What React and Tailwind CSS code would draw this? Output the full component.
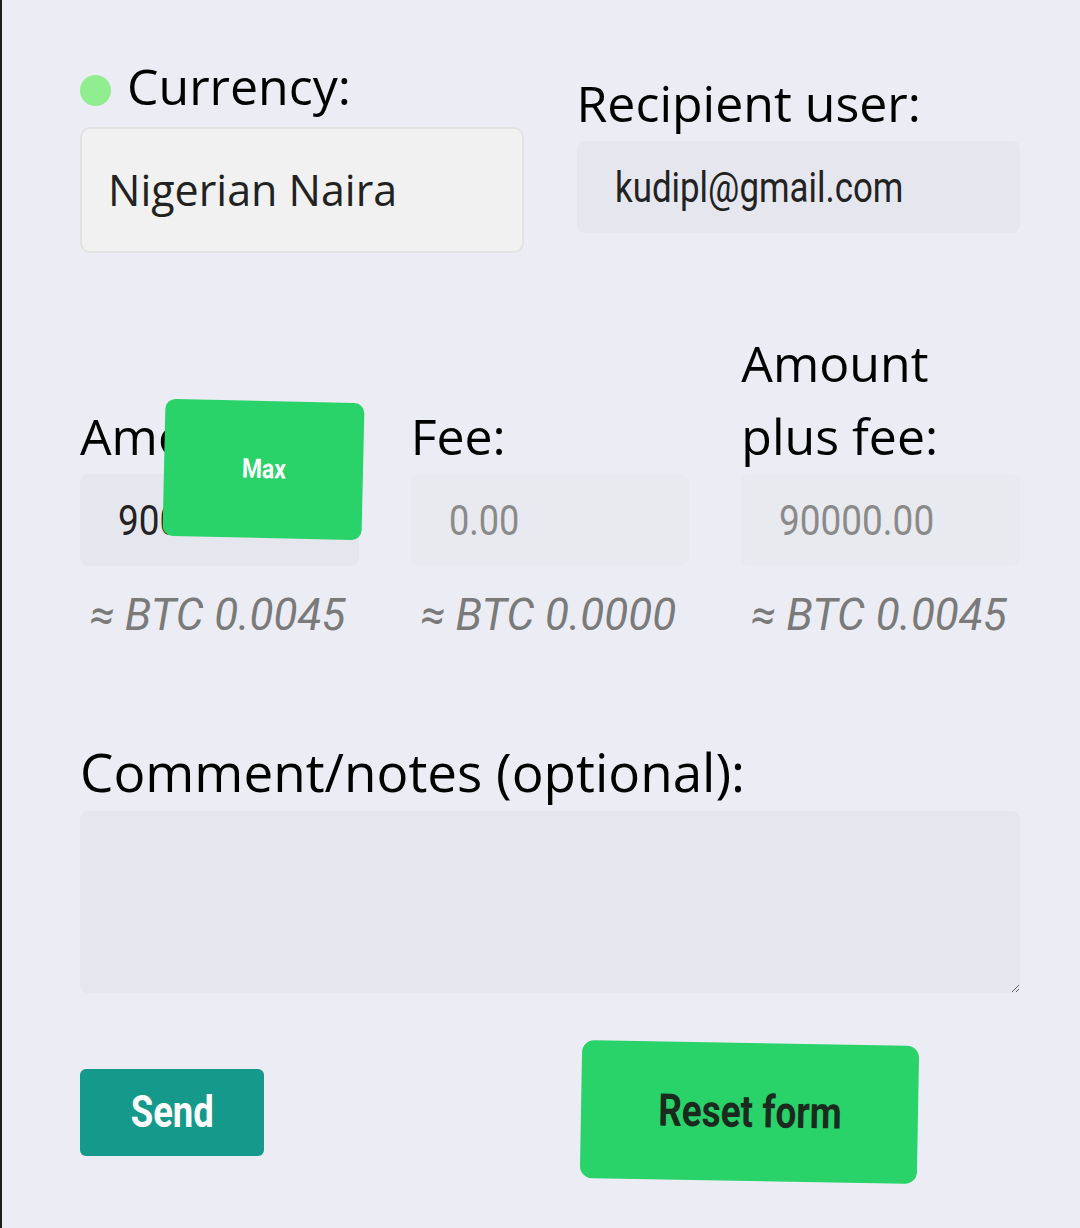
import React from 'react';

const cond = "font-['Roboto',sans-serif]";

function Narrow({ children, scale = 'scale-x-[0.85]', origin = 'origin-left' }) {
  return <span className={`inline-block ${scale} ${origin}`}>{children}</span>;
}

function Field({ children, muted, className = '' }) {
  return (
    <div className={`h-[92px] rounded-lg flex items-center pl-[38px] ${cond} text-[42px] whitespace-nowrap overflow-hidden ${muted ? 'bg-[#e9eaef] text-[#8a8a8a]' : 'bg-[#e5e6ee] text-[#222]'} ${className}`}>
      {children}
    </div>
  );
}

function Btc({ value }) {
  return (
    <div className="mt-[27px] pl-[10px] font-['Roboto',sans-serif] italic text-[44px] leading-[44px] text-[#7a7a7a] whitespace-nowrap">
      ≈ BTC {value}
    </div>
  );
}

export default function App() {
  return (
    <div className="min-h-screen bg-[#ecedf4] border-l-2 border-[#1d1d1d] pl-[78px] pr-[60px] pt-[56px] pb-[40px] font-['Open_Sans',sans-serif] text-black">
      {/* currency + recipient */}
      <div className="grid grid-cols-2 gap-x-[53px] items-start">
        <div>
          <div className="flex items-start gap-[16px]">
            <span className="mt-[19px] w-[31px] h-[31px] rounded-full bg-[#90ee90] shrink-0"></span>
            <div className="text-[50px] leading-[60px]">Currency:</div>
          </div>
          <div className="mt-[11px] h-[126px] rounded-[10px] border-2 border-[#e2e2e2] bg-[#f1f1f1] flex items-center pl-[26px] text-[43px] text-[#222]">
            Nigerian Naira
          </div>
        </div>
        <div className="mt-[17px]">
          <div className="text-[50px] leading-[60px]">Recipient user:</div>
          <Field className="mt-[8px]">
            <Narrow scale="scale-x-[0.83]">kudipl@gmail.com</Narrow>
          </Field>
        </div>
      </div>

      {/* amounts */}
      <div className="mt-[74px] grid grid-cols-3 gap-x-[52px]">
        <div className="relative flex flex-col justify-end">
          <div className="text-[50px] leading-[73px] whitespace-nowrap overflow-hidden">Amount:</div>
          <Field className="mt-[1px]">
            <Narrow scale="scale-x-[0.88]">90000.00</Narrow>
          </Field>
          <Btc value="0.0045" />
          <button className="absolute left-[84px] top-[74px] w-[199px] h-[137px] rotate-[1.3deg] rounded-[10px] bg-[#29d36a] text-white font-['Roboto',sans-serif] font-bold text-[27px]">
            <Narrow scale="scale-x-[0.85]" origin="origin-center">Max</Narrow>
          </button>
        </div>
        <div className="flex flex-col justify-end">
          <div className="text-[50px] leading-[73px]">Fee:</div>
          <Field muted className="mt-[1px]">
            <Narrow scale="scale-x-[0.86]">0.00</Narrow>
          </Field>
          <Btc value="0.0000" />
        </div>
        <div className="flex flex-col justify-end">
          <div className="text-[50px] leading-[73px]">Amount<br />plus fee:</div>
          <Field muted className="mt-[1px]">
            <Narrow scale="scale-x-[0.88]">90000.00</Narrow>
          </Field>
          <Btc value="0.0045" />
        </div>
      </div>

      {/* comment */}
      <div className="mt-[105px]">
        <div className="text-[53px] leading-[60px] whitespace-nowrap">Comment/notes (optional):</div>
        <textarea className="mt-[9px] block w-full h-[182px] rounded-lg bg-[#e5e6ee] outline-none resize-y" />
      </div>

      {/* buttons */}
      <div className="mt-[50px] flex items-center">
        <button className="w-[184px] h-[87px] rounded-md bg-[#15998a] text-white font-['Roboto',sans-serif] font-bold text-[45px]">
          <Narrow scale="scale-x-[0.81]" origin="origin-center">Send</Narrow>
        </button>
        <button className="ml-[317px] w-[337px] h-[138px] rotate-[1deg] rounded-[12px] bg-[#29d36a] text-[#1b2a1e] font-['Roboto',sans-serif] font-bold text-[45px]">
          <Narrow scale="scale-x-[0.82]" origin="origin-center">Reset form</Narrow>
        </button>
      </div>
    </div>
  );
}
